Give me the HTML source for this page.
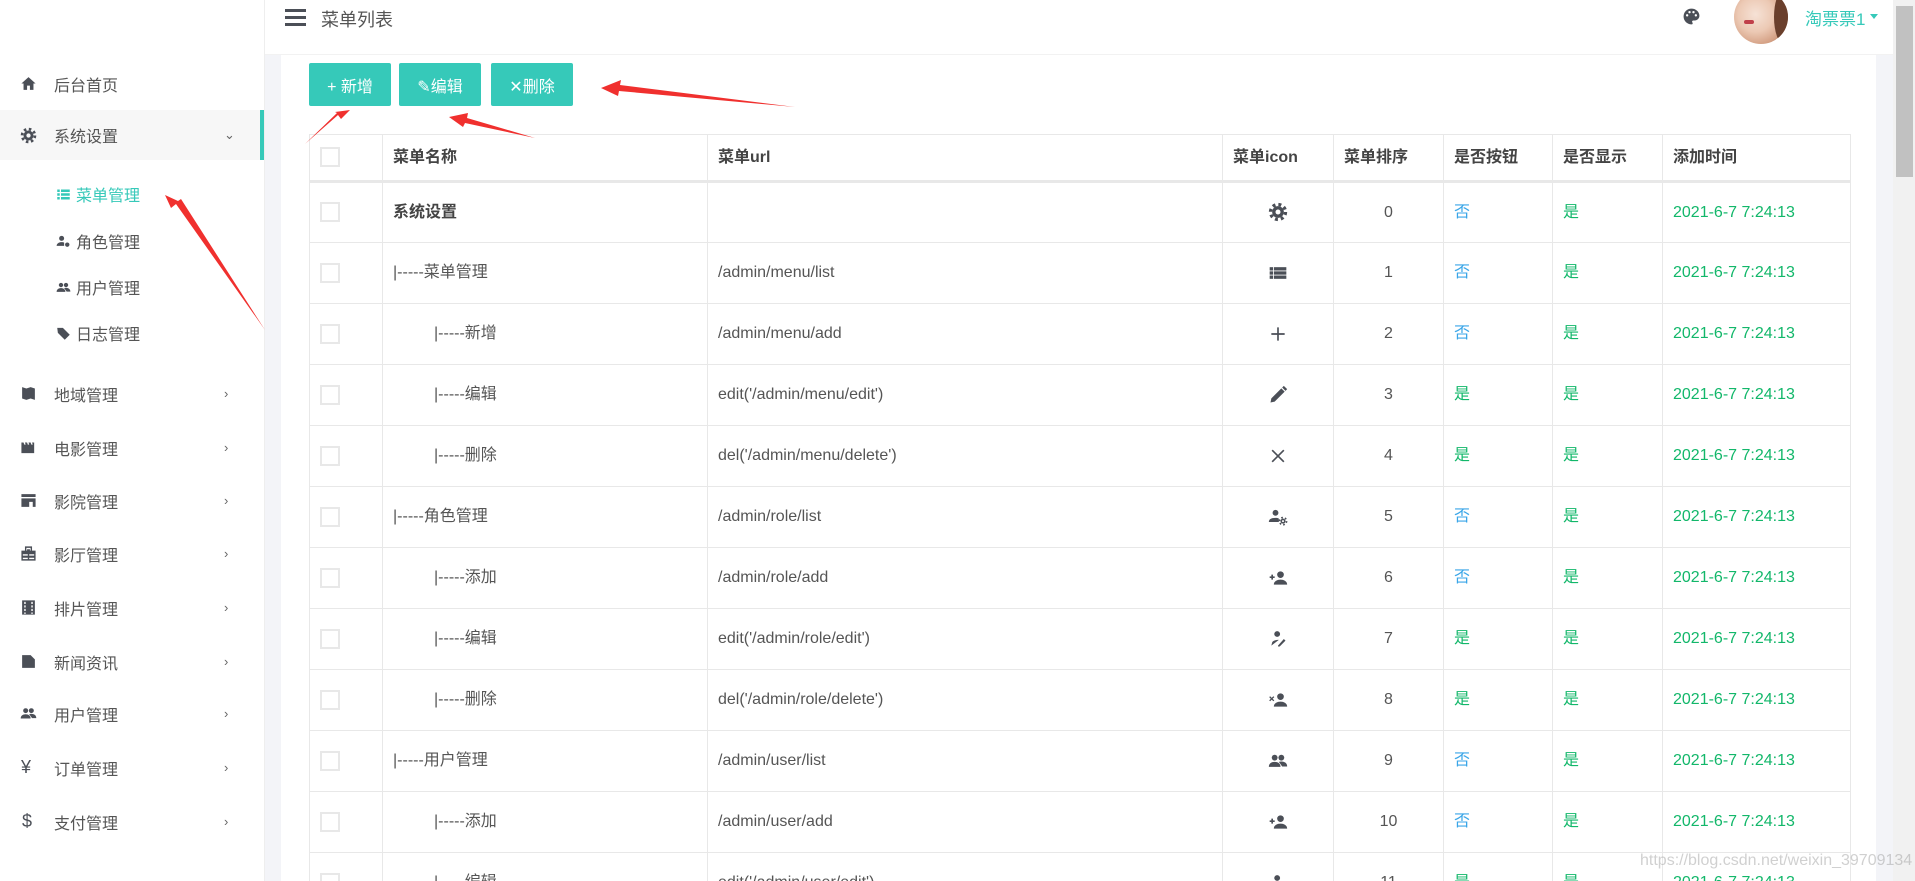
<!DOCTYPE html>
<html><head><meta charset="utf-8"><style>
*{margin:0;padding:0;box-sizing:border-box}
html{width:1915px;height:881px;overflow:hidden}
body{width:1915px;height:881px;overflow:hidden;background:#f3f4f8;font-family:"Liberation Sans","Noto Sans CJK SC",sans-serif;color:#555;position:relative}
.abs{position:absolute}
#side{left:0;top:0;width:265px;height:881px;background:#fff;border-right:1px solid #eee}
.mi{position:absolute;left:0;width:264px;height:53px;font-size:16px;color:#555;display:flex;align-items:center}
.mi svg{position:absolute;left:20px;width:17px;height:17px;fill:#4b4f57}
.mi span.t{position:absolute;left:54px}
.mi .ch{position:absolute;left:224px;font-size:13px;color:#666}
.si{position:absolute;left:0;width:264px;height:40px;font-size:16px;color:#555;display:flex;align-items:center}
.si svg{position:absolute;left:56px;width:15px;height:15px;fill:#4b4f57}
.si span{position:absolute;left:76px}
#hdr{left:265px;top:0;width:1630px;height:55px;background:#fff}
#card{left:281px;top:55px;width:1595px;height:826px;background:#fff}
.btn{position:absolute;top:63px;height:43px;width:82px;background:#36c9b9;color:#fff;font-size:16px;border-radius:2px;display:flex;align-items:center;justify-content:center}
#tw{position:absolute;left:0;top:0;width:1915px;height:881px;overflow:hidden}
table{position:absolute;left:309px;top:134px;width:1541px;border-collapse:collapse;table-layout:fixed;font-size:16px}
td,th{border:1px solid #e8e8e8;height:61px;padding:0 10px;white-space:nowrap;overflow:hidden;text-align:left;color:#555;font-weight:normal;line-height:20px}
th{height:47px;font-weight:bold;color:#444;border-bottom:3px solid #e8e8e8}
td.c,th.c{text-align:center}
.cb{display:inline-block;width:20px;height:20px;border:2px solid #e8e8e8;vertical-align:middle}
.b{color:#3aa6e8}.g{color:#12b76a}
.in{padding-left:51px}
td svg{width:20px;height:20px;fill:#4b4f57;vertical-align:middle}
</style></head><body>
<div id="side" class="abs">
 <div class="mi" style="top:57px"><svg viewBox="0 0 24 24"><path d="M12 3L2 12h3v9h5v-6h4v6h5v-9h3z"/></svg><span class="t">后台首页</span></div>
 <div class="mi" style="top:110px;height:50px;background:#f7f7f7"><svg viewBox="0 0 24 24"><circle cx="12" cy="12" r="7"/><circle cx="12" cy="12" r="9" fill="none" stroke="#4b4f57" stroke-width="4" stroke-dasharray="3.5 3.6"/><circle cx="12" cy="12" r="3" fill="#f7f7f7"/></svg><span class="t">系统设置</span><span class="ch">&#8964;</span><div class="abs" style="right:0;top:0;width:4px;height:50px;background:#36c9b9"></div></div>
 <div class="si" style="top:174px"><svg viewBox="0 0 24 24" style="fill:#36c9b9"><rect x="2" y="4" width="4" height="4"/><rect x="8" y="4" width="14" height="4"/><rect x="2" y="10" width="4" height="4"/><rect x="8" y="10" width="14" height="4"/><rect x="2" y="16" width="4" height="4"/><rect x="8" y="16" width="14" height="4"/></svg><span style="color:#36c9b9">菜单管理</span></div>
 <div class="si" style="top:221px"><svg viewBox="0 0 24 24"><circle cx="9" cy="7" r="4"/><path d="M1 19c0-4 4-6 8-6 2 0 3 .3 4 .8V19z"/><circle cx="18" cy="17" r="3.5"/></svg><span>角色管理</span></div>
 <div class="si" style="top:267px"><svg viewBox="0 0 24 24"><circle cx="8" cy="8" r="3.5"/><circle cx="16" cy="8" r="3.5"/><path d="M1 19c0-4 3-6 7-6s7 2 7 6zM13 13c1-.3 2-.4 3-.4 4 0 7 2 7 6h-6z"/></svg><span>用户管理</span></div>
 <div class="si" style="top:313px"><svg viewBox="0 0 24 24"><path d="M2 3h9l11 11-8 8L3 11z"/></svg><span>日志管理</span></div>
 <div class="mi" style="top:367px"><svg viewBox="0 0 24 24"><path d="M3 3l6 2 6-2 6 2v16l-6-2-6 2-6-2z"/></svg><span class="t">地域管理</span><span class="ch">›</span></div>
 <div class="mi" style="top:421px"><svg viewBox="0 0 24 24"><path d="M2 5h3l1 3h2l-1-3h3l1 3h2l-1-3h3l1 3h2l-1-3h3v15H2z"/></svg><span class="t">电影管理</span><span class="ch">›</span></div>
 <div class="mi" style="top:474px"><svg viewBox="0 0 24 24"><path d="M2 3h20v4H2zM2 9h20v12h-4v-7H13v7H2z"/></svg><span class="t">影院管理</span><span class="ch">›</span></div>
 <div class="mi" style="top:527px"><svg viewBox="0 0 24 24"><path d="M7 2h10v6h5v14H2V8h5zM9 4v4h1V6h4v2h1V4zM4 13v2h7v-2zm9 0v2h7v-2zM4 18v2h7v-2zm9 0v2h7v-2z"/></svg><span class="t">影厅管理</span><span class="ch">›</span></div>
 <div class="mi" style="top:581px"><svg viewBox="0 0 24 24"><path d="M3 2h18v20H3zM6 4v3h2V4zm0 5v3h2V9zm0 5v3h2v-3zm0 5v2h2v-2zM16 4v3h2V4zm0 5v3h2V9zm0 5v3h2v-3zm0 5v2h2v-2z"/></svg><span class="t">排片管理</span><span class="ch">›</span></div>
 <div class="mi" style="top:635px"><svg viewBox="0 0 24 24"><path d="M3 3h12l6 6v12H3zM6 12h12v2H6zm0 4h12v2H6z"/></svg><span class="t">新闻资讯</span><span class="ch">›</span></div>
 <div class="mi" style="top:687px"><svg viewBox="0 0 24 24"><circle cx="8" cy="8" r="3.5"/><circle cx="16" cy="8" r="3.5"/><path d="M1 19c0-4 3-6 7-6s7 2 7 6zM13 13c1-.3 2-.4 3-.4 4 0 7 2 7 6h-6z"/></svg><span class="t">用户管理</span><span class="ch">›</span></div>
 <div class="mi" style="top:741px"><span style="position:absolute;left:21px;font-size:18px;color:#4b4f57">¥</span><span class="t">订单管理</span><span class="ch">›</span></div>
 <div class="mi" style="top:795px"><span style="position:absolute;left:22px;font-size:18px;color:#4b4f57">$</span><span class="t">支付管理</span><span class="ch">›</span></div>
</div>
<div id="hdr" class="abs" style="border-bottom:1px solid #f2f2f2">
 <div class="abs" style="left:20px;top:9px;width:21px;height:3px;background:#4b4f57"></div>
 <div class="abs" style="left:20px;top:16px;width:21px;height:3px;background:#4b4f57"></div>
 <div class="abs" style="left:20px;top:23px;width:21px;height:3px;background:#4b4f57"></div>
 <div class="abs" style="left:56px;top:6px;font-size:18px;color:#555">菜单列表</div>
 <svg class="abs" style="left:1417px;top:7px" width="19" height="19" viewBox="0 0 24 24"><path fill="#4b4f57" d="M12 2C6 2 2 6.5 2 12s4.5 10 10 10c1 0 1.5-.7 1.5-1.5 0-.4-.2-.7-.4-1-.2-.3-.4-.6-.4-1 0-.8.7-1.5 1.5-1.5H16c3.3 0 6-2.7 6-6C22 6 17.5 2 12 2zM6.5 12a1.5 1.5 0 110-3 1.5 1.5 0 010 3zm3-4a1.5 1.5 0 110-3 1.5 1.5 0 010 3zm5 0a1.5 1.5 0 110-3 1.5 1.5 0 010 3zm3 4a1.5 1.5 0 110-3 1.5 1.5 0 010 3z"/></svg>
 <div class="abs" style="left:1469px;top:-10px;width:54px;height:54px;border-radius:50%;overflow:hidden;background:radial-gradient(circle at 40% 45%,#f6e2d6 0,#ecc9b4 40%,#d4a084 70%,#7a4a34 100%)"><div class="abs" style="left:40px;top:0;width:20px;height:54px;background:#6a3f2c;border-radius:50%"></div></div>
 <div class="abs" style="left:1479px;top:20px;width:10px;height:4px;border-radius:2px;background:#c0404a"></div>
 <div class="abs" style="left:1540px;top:5px;font-size:17px;color:#36c9b9">淘票票1</div>
 <div class="abs" style="left:1605px;top:14px;border:4px solid transparent;border-top:5px solid #36c9b9"></div>
</div>
<div class="abs" style="left:1893px;top:0;width:22px;height:881px;background:#f1f1f1"></div>
<div class="abs" style="left:1896px;top:6px;width:17px;height:171px;background:#c1c1c1"></div>
<div id="card" class="abs"></div>
<div class="btn" style="left:309px">+ 新增</div>
<div class="btn" style="left:399px">✎编辑</div>
<div class="btn" style="left:491px">✕删除</div>
<div id="tw">
<table>
<colgroup><col style="width:73px"><col style="width:325px"><col style="width:515px"><col style="width:111px"><col style="width:110px"><col style="width:109px"><col style="width:110px"><col style="width:188px"></colgroup>
<tr><th><span class="cb"></span></th><th>菜单名称</th><th>菜单url</th><th>菜单icon</th><th>菜单排序</th><th>是否按钮</th><th>是否显示</th><th>添加时间</th></tr>
<tr><td><span class="cb"></span></td><td style="font-weight:bold;color:#444">系统设置</td><td></td><td class="c"><svg viewBox="0 0 24 24"><circle cx="12" cy="12" r="7"/><circle cx="12" cy="12" r="9" fill="none" stroke="#4b4f57" stroke-width="4" stroke-dasharray="3.5 3.6"/><circle cx="12" cy="12" r="3" fill="#fff"/></svg></td><td class="c">0</td><td class="b">否</td><td class="g">是</td><td class="g">2021-6-7 7:24:13</td></tr>
<tr><td><span class="cb"></span></td><td>|-----菜单管理</td><td>/admin/menu/list</td><td class="c"><svg viewBox="0 0 24 24"><rect x="2" y="5" width="4" height="4"/><rect x="7" y="5" width="15" height="4"/><rect x="2" y="10" width="4" height="4"/><rect x="7" y="10" width="15" height="4"/><rect x="2" y="15" width="4" height="4"/><rect x="7" y="15" width="15" height="4"/></svg></td><td class="c">1</td><td class="b">否</td><td class="g">是</td><td class="g">2021-6-7 7:24:13</td></tr>
<tr><td><span class="cb"></span></td><td class="in">|-----新增</td><td>/admin/menu/add</td><td class="c"><svg viewBox="0 0 24 24"><path d="M11 4h2v16h-2zM4 11h16v2H4z"/></svg></td><td class="c">2</td><td class="b">否</td><td class="g">是</td><td class="g">2021-6-7 7:24:13</td></tr>
<tr><td><span class="cb"></span></td><td class="in">|-----编辑</td><td>edit('/admin/menu/edit')</td><td class="c"><svg viewBox="0 0 24 24"><path d="M3 21l1-5L16 4l4 4L8 20zM17 3l2-2 4 4-2 2z"/></svg></td><td class="c">3</td><td class="g">是</td><td class="g">是</td><td class="g">2021-6-7 7:24:13</td></tr>
<tr><td><span class="cb"></span></td><td class="in">|-----删除</td><td>del('/admin/menu/delete')</td><td class="c"><svg viewBox="0 0 24 24"><path d="M5 5l14 14M19 5L5 19" stroke="#4b4f57" stroke-width="2"/></svg></td><td class="c">4</td><td class="g">是</td><td class="g">是</td><td class="g">2021-6-7 7:24:13</td></tr>
<tr><td><span class="cb"></span></td><td>|-----角色管理</td><td>/admin/role/list</td><td class="c"><svg viewBox="0 0 24 24"><circle cx="9" cy="7" r="3.5"/><path d="M1 18c0-4 4-5 8-5 2 0 3 .3 4 .8V18z"/><circle cx="18" cy="17" r="3"/><circle cx="18" cy="17" r="4.3" fill="none" stroke="#4b4f57" stroke-width="2" stroke-dasharray="2 2.5"/><circle cx="18" cy="17" r="1.2" fill="#fff"/></svg></td><td class="c">5</td><td class="b">否</td><td class="g">是</td><td class="g">2021-6-7 7:24:13</td></tr>
<tr><td><span class="cb"></span></td><td class="in">|-----添加</td><td>/admin/role/add</td><td class="c"><svg viewBox="0 0 24 24"><circle cx="15" cy="8" r="4"/><path d="M7 20c0-4 4-6 8-6s8 2 8 6zM4 8h2v6H4zM2 10h6v2H2z"/></svg></td><td class="c">6</td><td class="b">否</td><td class="g">是</td><td class="g">2021-6-7 7:24:13</td></tr>
<tr><td><span class="cb"></span></td><td class="in">|-----编辑</td><td>edit('/admin/role/edit')</td><td class="c"><svg viewBox="0 0 24 24"><circle cx="11" cy="6" r="3.5"/><path d="M4 20l1-4c1-2 4-3 8-3zM12 20l7-8 2 2-7 7h-2z"/></svg></td><td class="c">7</td><td class="g">是</td><td class="g">是</td><td class="g">2021-6-7 7:24:13</td></tr>
<tr><td><span class="cb"></span></td><td class="in">|-----删除</td><td>del('/admin/role/delete')</td><td class="c"><svg viewBox="0 0 24 24"><circle cx="15" cy="8" r="4"/><path d="M7 20c0-4 4-6 8-6s8 2 8 6z"/><path d="M2 8l5 5M7 8l-5 5" stroke="#4b4f57" stroke-width="1.6"/></svg></td><td class="c">8</td><td class="g">是</td><td class="g">是</td><td class="g">2021-6-7 7:24:13</td></tr>
<tr><td><span class="cb"></span></td><td>|-----用户管理</td><td>/admin/user/list</td><td class="c"><svg viewBox="0 0 24 24"><circle cx="8" cy="8" r="3.5"/><circle cx="16" cy="8" r="3.5"/><path d="M1 19c0-4 3-6 7-6s7 2 7 6zM13 13c1-.3 2-.4 3-.4 4 0 7 2 7 6h-6z"/></svg></td><td class="c">9</td><td class="b">否</td><td class="g">是</td><td class="g">2021-6-7 7:24:13</td></tr>
<tr><td><span class="cb"></span></td><td class="in">|-----添加</td><td>/admin/user/add</td><td class="c"><svg viewBox="0 0 24 24"><circle cx="15" cy="8" r="4"/><path d="M7 20c0-4 4-6 8-6s8 2 8 6zM4 8h2v6H4zM2 10h6v2H2z"/></svg></td><td class="c">10</td><td class="b">否</td><td class="g">是</td><td class="g">2021-6-7 7:24:13</td></tr>
<tr><td><span class="cb"></span></td><td class="in">|-----编辑</td><td>edit('/admin/user/edit')</td><td class="c"><svg viewBox="0 0 24 24"><circle cx="11" cy="6" r="3.5"/><path d="M4 20l1-4c1-2 4-3 8-3zM12 20l7-8 2 2-7 7h-2z"/></svg></td><td class="c">11</td><td class="g">是</td><td class="g">是</td><td class="g">2021-6-7 7:24:13</td></tr>
</table>
</div>
<div class="abs" style="left:1640px;top:852px;font-size:16px;color:rgba(150,150,150,.45)">https://blog.csdn.net/weixin_39709134</div>
<svg class="abs" style="left:0;top:0" width="1915" height="881">
 <g fill="#f0302e">
  <polygon points="795,107 620,85 621,80 601,88 618,96 619,91"/>
  <polygon points="535,138 467,118 468,113 449,117 463,127 465,123"/>
  <polygon points="305,144 338,115 341,119 350,110 335,112 337,113"/>
  <polygon points="265,330 176,204 171,208 165,195 178,201 181,199"/>
 </g>
</svg>
</body></html>
